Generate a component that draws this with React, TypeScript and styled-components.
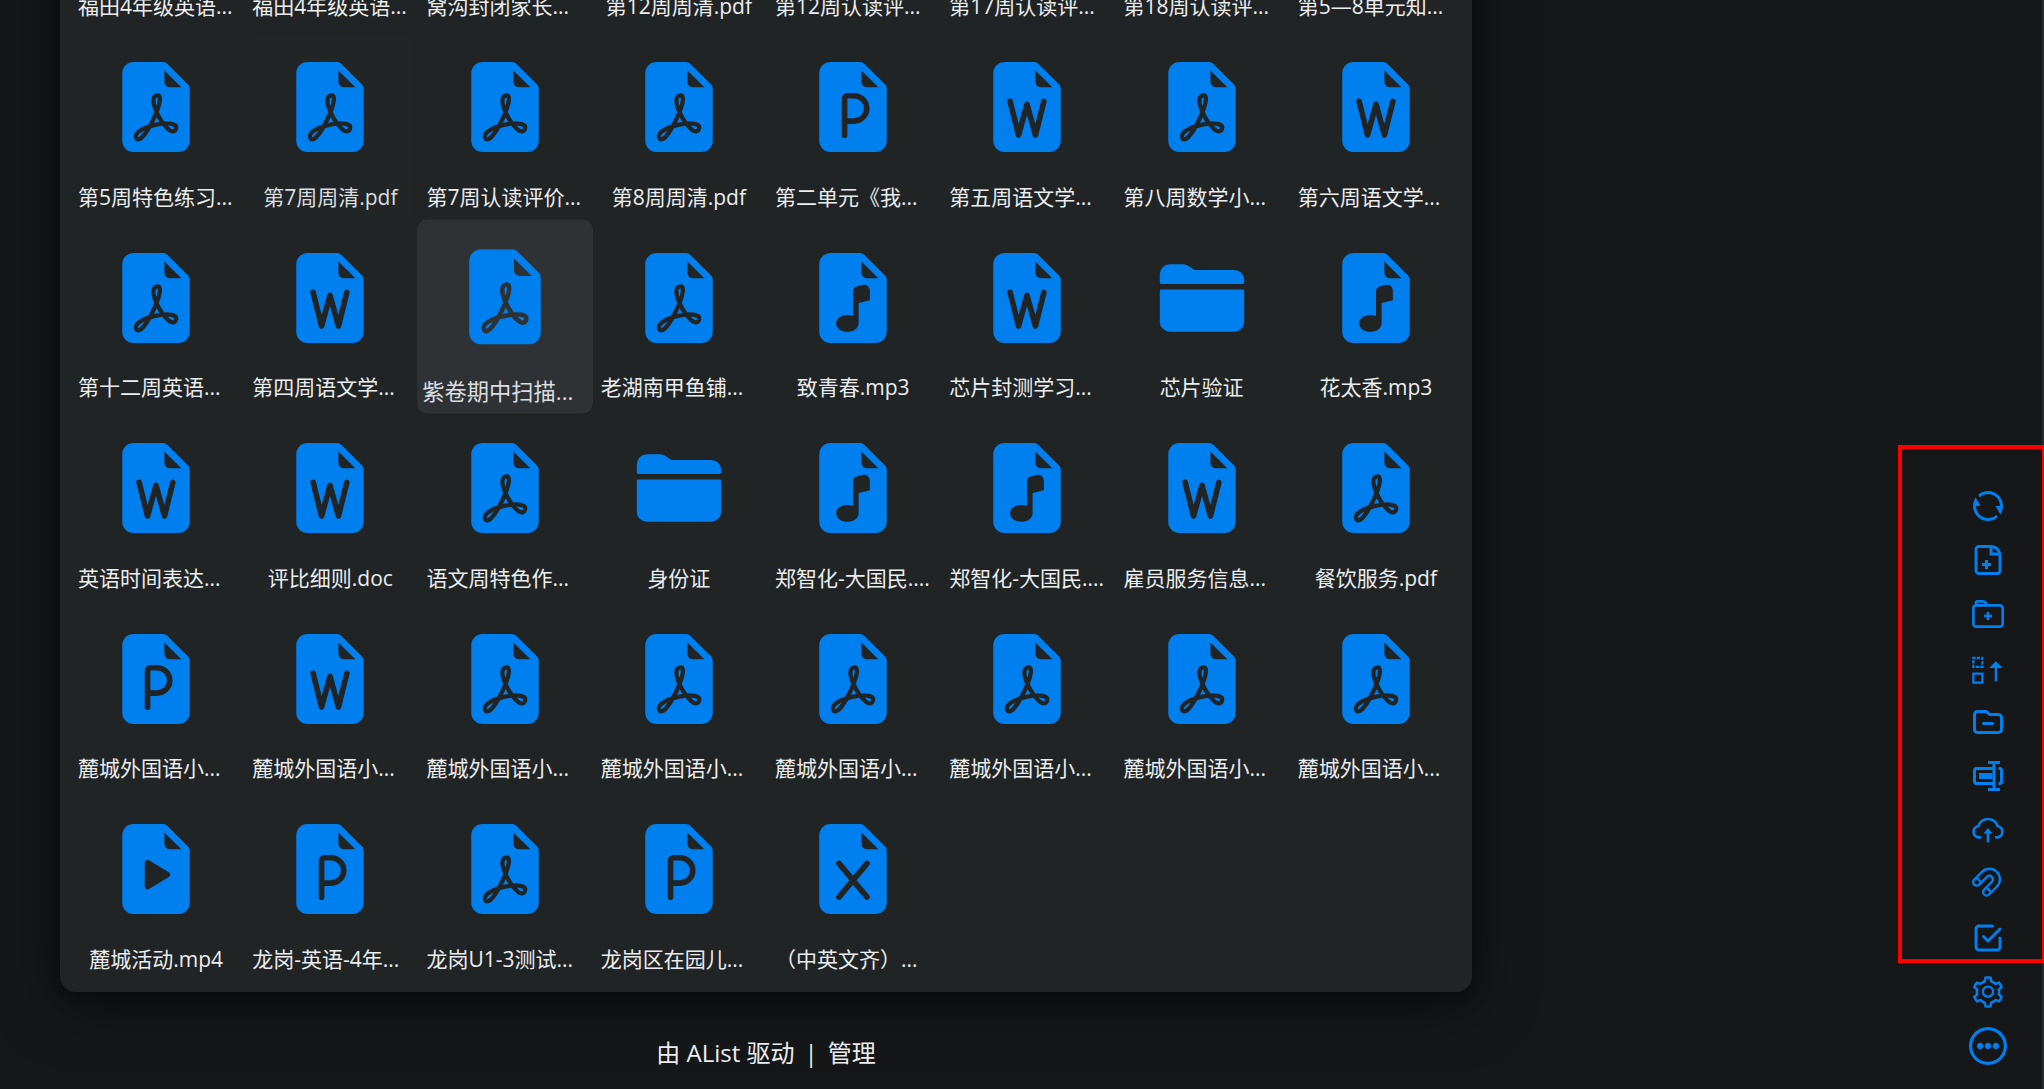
import React from "react";
import styled, { createGlobalStyle, css } from "styled-components";
import {
  BsFileEarmarkPdfFill,
  BsFileEarmarkWordFill,
  BsFileEarmarkPptFill,
  BsFileEarmarkExcelFill,
  BsFileEarmarkMusicFill,
  BsFileEarmarkPlayFill,
} from "react-icons/bs";
import { IoFolder } from "react-icons/io5";
import { RiRefreshLine } from "react-icons/ri";
import { CgFileAdd, CgFolderAdd, CgMoreO } from "react-icons/cg";
import { ImMoveUp } from "react-icons/im";
import { HiOutlineFolderRemove } from "react-icons/hi";
import { BiRename } from "react-icons/bi";
import { AiOutlineCloudUpload, AiOutlineSetting } from "react-icons/ai";
import { TbCheckbox } from "react-icons/tb";

const color = {
  page: "#151718",
  card: "#202425",
  raised: "#2e3235",
  fading: "#212526",
  text: "#ecedee",
  muted: "#dcdee0",
  accent: "#007fee",
  mark: "#ff0000",
  edge: "#2a2b2c",
};

const GlobalStyle = createGlobalStyle`
  *, *::before, *::after { box-sizing: border-box; }
  body {
    margin: 0;
    background: ${color.page};
    color: ${color.text};
    font-family: "Open Sans", "Noto Sans CJK SC", sans-serif;
    font-size: 21px;
    line-height: 1.5;
  }
`;

const Page = styled.div`
  display: grid;
  grid-template-columns: minmax(0, 1fr) 512px;
  height: 100vh;
  overflow: hidden;
`;

const Main = styled.main`
  display: flex;
  flex-direction: column;
  justify-content: flex-end;
  min-height: 0;
  padding: 0 60px;
`;

const Card = styled.section`
  flex: none;
  padding: 13px;
  border-radius: 16px;
  background: ${color.card};
  box-shadow: 0 10px 60px rgba(0, 0, 0, 0.5), 0 5px 20px rgba(0, 0, 0, 0.3);
`;

const FileGrid = styled.div`
  display: grid;
  grid-template-columns: repeat(8, minmax(0, 1fr));
  gap: 8px;
`;

type CellState = "rest" | "hover" | "fading";

const Cell = styled.a<{ $state: CellState }>`
  display: flex;
  flex-direction: column;
  gap: 7px;
  padding: 5px 5px 4px;
  border-radius: 10px;
  color: inherit;
  text-decoration: none;
  ${({ $state }) =>
    $state === "hover" &&
    css`
      background: ${color.raised};
      color: ${color.muted};
      transform: scale(1.06);
    `}
  ${({ $state }) =>
    $state === "fading" &&
    css`
      background: ${color.fading};
      color: ${color.muted};
    `}
`;

const Thumb = styled.span`
  display: flex;
  align-items: center;
  justify-content: center;
  height: 135px;
  color: ${color.accent};
  font-size: 90px;
`;

const Name = styled.span<{ $cut: boolean }>`
  white-space: nowrap;
  text-align: ${({ $cut }) => ($cut ? "left" : "center")};
`;

const Footer = styled.footer`
  display: flex;
  flex: none;
  align-items: center;
  justify-content: center;
  gap: 10px;
  height: 97px;
  padding-top: 24px;
  font-size: 24px;
`;

const FooterLink = styled.a`
  color: inherit;
  text-decoration: none;
`;

const Side = styled.aside`
  display: flex;
  flex-direction: column;
  align-items: flex-end;
  justify-content: flex-end;
  padding: 0 36px 25px 0;
  border-right: 2px solid ${color.edge};
`;

const Tools = styled.div`
  position: relative;
  display: flex;
  flex-direction: column;
  gap: 18px;
  margin-bottom: 18px;
  &:last-child {
    margin-bottom: 0;
  }
`;

const Marker = styled.div`
  position: absolute;
  inset: -43px -38px -7px -72px;
  border: 4px solid ${color.mark};
  border-right-width: 2px;
  pointer-events: none;
`;

const ToolButton = styled.button<{ $size: number }>`
  display: flex;
  align-items: center;
  justify-content: center;
  width: 36px;
  height: 36px;
  padding: 0;
  border: 0;
  background: none;
  color: ${color.accent};
  font-size: ${({ $size }) => $size}px;
  cursor: pointer;
  svg {
    flex: none;
  }
`;

function MagnetIcon() {
  return (
    <svg
      width="1em"
      height="1em"
      viewBox="0 0 36 36"
      fill="none"
      stroke="currentColor"
      strokeWidth="2.4"
    >
      <g transform="translate(19.4 13.3) rotate(45)">
        <path d="M-10.5 0A10.5 10.5 0 0 1 10.5 0V11a3.5 3.5 0 0 1-7 0V0A3.5 3.5 0 0 0-3.5 0V11a3.5 3.5 0 0 1-7 0Z" />
        <path d="M-10.5 8h7M3.5 8h7" />
      </g>
    </svg>
  );
}

const icons = {
  pdf: BsFileEarmarkPdfFill,
  word: BsFileEarmarkWordFill,
  ppt: BsFileEarmarkPptFill,
  excel: BsFileEarmarkExcelFill,
  music: BsFileEarmarkMusicFill,
  video: BsFileEarmarkPlayFill,
  folder: IoFolder,
};

type Item = [keyof typeof icons, string, CellState?];

const items: Item[] = [
  ["pdf", "福田4年级英语..."],
  ["pdf", "福田4年级英语..."],
  ["pdf", "窝沟封闭家长..."],
  ["pdf", "第12周周清.pdf"],
  ["pdf", "第12周认读评..."],
  ["pdf", "第17周认读评..."],
  ["pdf", "第18周认读评..."],
  ["pdf", "第5—8单元知..."],

  ["pdf", "第5周特色练习..."],
  ["pdf", "第7周周清.pdf", "fading"],
  ["pdf", "第7周认读评价..."],
  ["pdf", "第8周周清.pdf"],
  ["ppt", "第二单元《我..."],
  ["word", "第五周语文学..."],
  ["pdf", "第八周数学小..."],
  ["word", "第六周语文学..."],

  ["pdf", "第十二周英语..."],
  ["word", "第四周语文学..."],
  ["pdf", "紫卷期中扫描...", "hover"],
  ["pdf", "老湖南甲鱼铺..."],
  ["music", "致青春.mp3"],
  ["word", "芯片封测学习..."],
  ["folder", "芯片验证"],
  ["music", "花太香.mp3"],

  ["word", "英语时间表达..."],
  ["word", "评比细则.doc"],
  ["pdf", "语文周特色作..."],
  ["folder", "身份证"],
  ["music", "郑智化-大国民...."],
  ["music", "郑智化-大国民...."],
  ["word", "雇员服务信息..."],
  ["pdf", "餐饮服务.pdf"],

  ["ppt", "麓城外国语小..."],
  ["word", "麓城外国语小..."],
  ["pdf", "麓城外国语小..."],
  ["pdf", "麓城外国语小..."],
  ["pdf", "麓城外国语小..."],
  ["pdf", "麓城外国语小..."],
  ["pdf", "麓城外国语小..."],
  ["pdf", "麓城外国语小..."],

  ["video", "麓城活动.mp4"],
  ["ppt", "龙岗-英语-4年..."],
  ["pdf", "龙岗U1-3测试..."],
  ["ppt", "龙岗区在园儿..."],
  ["excel", "（中英文齐）..."],
];

type Tool = { label: string; icon: React.ComponentType; size?: number };

const folderTools: Tool[] = [
  { label: "刷新", icon: RiRefreshLine },
  { label: "新建文件", icon: CgFileAdd },
  { label: "新建文件夹", icon: CgFolderAdd, size: 32 },
  { label: "聚合", icon: ImMoveUp },
  { label: "删除空文件夹", icon: HiOutlineFolderRemove },
  { label: "批量重命名", icon: BiRename },
  { label: "上传", icon: AiOutlineCloudUpload },
  { label: "离线下载", icon: MagnetIcon },
  { label: "显示复选框", icon: TbCheckbox },
];

const pageTools: Tool[] = [
  { label: "本地设置", icon: AiOutlineSetting },
  { label: "更多", icon: CgMoreO, size: 38 },
];

function ToolItem({ label, icon: Icon, size = 36 }: Tool) {
  return (
    <ToolButton type="button" aria-label={label} $size={size}>
      <Icon />
    </ToolButton>
  );
}

export default function App() {
  return (
    <>
      <GlobalStyle />
      <Page>
        <Main>
          <Card>
            <FileGrid>
              {items.map(([kind, name, state = "rest"], index) => {
                const Icon = icons[kind];
                return (
                  <Cell key={index} href="#" $state={state}>
                    <Thumb>
                      <Icon />
                    </Thumb>
                    <Name $cut={name.endsWith("...")}>{name}</Name>
                  </Cell>
                );
              })}
            </FileGrid>
          </Card>
          <Footer>
            <FooterLink href="#">由 AList 驱动</FooterLink>
            <span>|</span>
            <FooterLink href="#">管理</FooterLink>
          </Footer>
        </Main>
        <Side>
          <Tools>
            {folderTools.map((tool) => (
              <ToolItem key={tool.label} {...tool} />
            ))}
            <Marker />
          </Tools>
          <Tools>
            {pageTools.map((tool) => (
              <ToolItem key={tool.label} {...tool} />
            ))}
          </Tools>
        </Side>
      </Page>
    </>
  );
}
